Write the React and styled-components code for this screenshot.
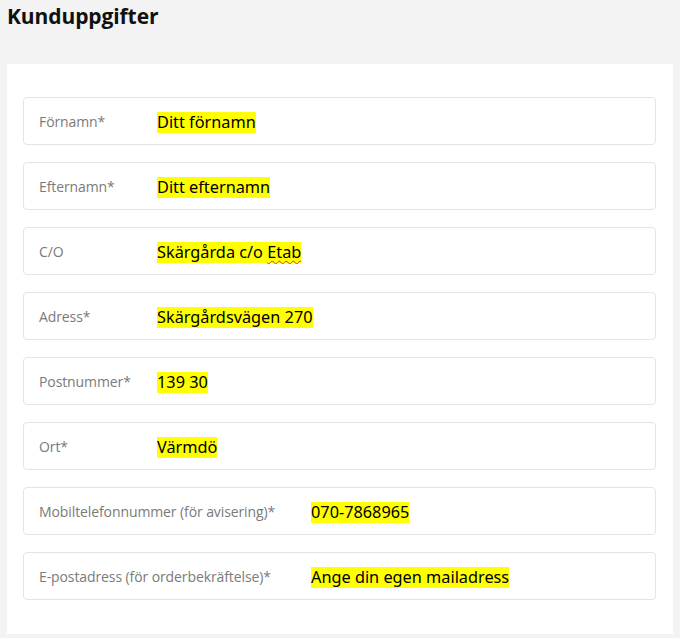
import React from 'react'
import styled, { createGlobalStyle } from 'styled-components'

const Global = createGlobalStyle`
  body {
    margin: 0;
    background-color: #f3f3f3;
    font-family: "Open Sans", "Liberation Sans", sans-serif;
  }
`

const fields = [
  { label: 'Förnamn*', value: 'Ditt förnamn' },
  { label: 'Efternamn*', value: 'Ditt efternamn' },
  { label: 'C/O', value: 'Skärgårda c/o', flagged: 'Etab' },
  { label: 'Adress*', value: 'Skärgårdsvägen 270' },
  { label: 'Postnummer*', value: '139 30' },
  { label: 'Ort*', value: 'Värmdö' },
  { label: 'Mobiltelefonnummer (för avisering)*', value: '070-7868965', wide: true },
  { label: 'E-postadress (för orderbekräftelse)*', value: 'Ange din egen mailadress', wide: true },
]

function App() {
  return (
    <Page>
      <Global />
      <Title>Kunduppgifter</Title>
      <Panel>
        {fields.map((f) => (
          <Field key={f.label}>
            <Label $wide={f.wide}>{f.label}</Label>
            <Value>
              {f.value}
              {f.flagged && <> <Misspelled>{f.flagged}</Misspelled></>}
            </Value>
          </Field>
        ))}
      </Panel>
    </Page>
  )
}

const Page = styled.div`
  padding: 0 7px 4px 7px;
`
const Title = styled.h1`
  margin: 0;
  height: 64px;
  padding-top: 2px;
  box-sizing: border-box;
  font-size: 21px;
  font-weight: 700;
  color: #111;
  letter-spacing: -0.1px;
`
const Panel = styled.div`
  background-color: #fff;
  padding: 33px 17px 34px 16px;
  display: flex;
  flex-direction: column;
  gap: 17px;
`
const Field = styled.div`
  height: 48px;
  box-sizing: border-box;
  border: 1px solid #e4e4e4;
  border-radius: 4px;
  display: flex;
  align-items: center;
  padding: 2px 0 0 15px;
`
const Label = styled.span`
  width: ${(p) => (p.$wide ? '272px' : '118px')};
  flex-shrink: 0;
  font-family: "Open Sans", "Lato", sans-serif;
  font-size: 14px;
  color: #7a7a7a;
  letter-spacing: -0.1px;
  margin-top: -2px;
`
const Value = styled.span`
  background-color: #ffff00;
  color: #000;
  font-family: "Noto Sans", "Liberation Sans", sans-serif;
  font-size: 16.3px;
  line-height: 21px;
`
const Misspelled = styled.span`
  text-decoration: underline wavy #e03030;
  text-decoration-thickness: 1px;
  text-underline-offset: 2px;
`

export default App
